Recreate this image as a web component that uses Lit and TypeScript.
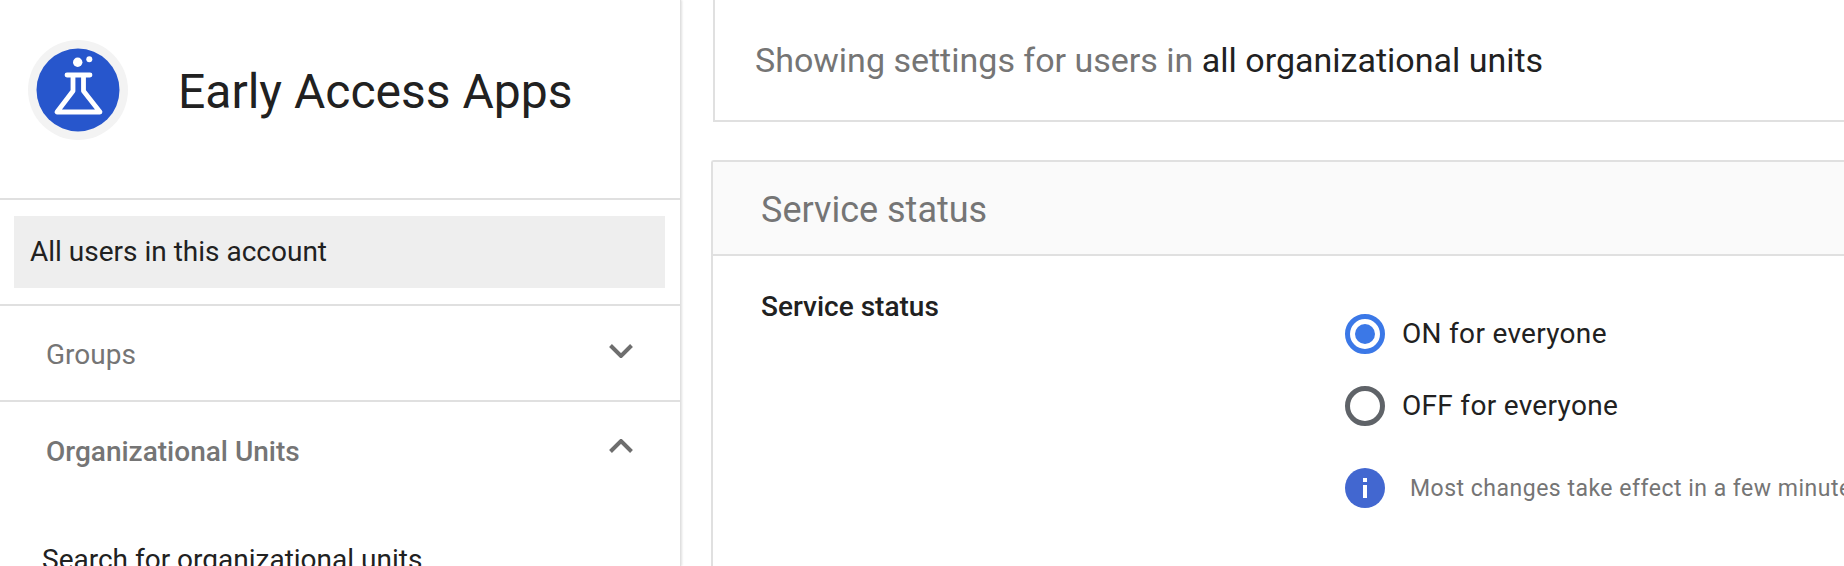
import { LitElement, html, css } from "lit";
import { customElement } from "lit/decorators.js";

@customElement("app-root")
export class AppRoot extends LitElement {
  static styles = css`
    :host {
      display: flex;
      width: 1844px;
      height: 566px;
      overflow: hidden;
      background: #fff;
      font-family: Roboto, "Liberation Sans", sans-serif;
      color: #212121;
    }
    .side {
      flex: none;
      box-sizing: border-box;
      width: 681px;
      height: 566px;
      overflow: hidden;
      border-right: 1px solid #e0e0e0;
      box-shadow: 1px 0 2px #0000001f;
    }
    .brand {
      box-sizing: border-box;
      height: 200px;
      padding: 40px 0 0 28px;
      display: flex;
      align-items: flex-start;
      gap: 50px;
      border-bottom: 2px solid #e0e0e0;
    }
    .logo {
      flex: none;
      display: block;
      width: 100px;
      height: 100px;
    }
    .brand h1 {
      margin: 24px 0 0;
      font-size: 48px;
      line-height: 56px;
      font-weight: 400;
    }
    .scope {
      padding: 16px 15px 16px 14px;
      border-bottom: 2px solid #e0e0e0;
    }
    .scope div {
      height: 72px;
      padding-left: 16px;
      background: #eee;
      font-size: 28px;
      line-height: 72px;
    }
    .row {
      box-sizing: border-box;
      height: 96px;
      padding: 2px 47px 0 46px;
      display: flex;
      align-items: center;
      justify-content: space-between;
      color: #757575;
      font-size: 28px;
    }
    .row.line {
      border-bottom: 2px solid #e0e0e0;
    }
    .row.line svg {
      margin-top: -6px;
    }
    .row b {
      font-weight: 500;
    }
    .row svg {
      width: 24px;
      height: 14px;
      margin-top: -10px;
    }
    .search {
      margin: 46px 0 0 42px;
      font-size: 28px;
      line-height: 32px;
    }
    .main {
      flex: none;
      width: 1163px;
      padding-left: 31px;
    }
    .note {
      box-sizing: border-box;
      height: 122px;
      margin-left: 1px;
      padding: 41px 0 0 40px;
      border: solid #e0e0e0;
      border-width: 0 0 2px 2px;
      color: #757575;
      font-size: 34px;
      line-height: 38px;
    }
    .note span {
      color: #212121;
    }
    .card {
      margin: 38px 0 0 -1px;
      border: solid #e0e0e0;
      border-width: 2px 0 0 2px;
      border-top-left-radius: 3px;
      height: 450px;
    }
    .card h2 {
      box-sizing: border-box;
      height: 94px;
      margin: 0;
      padding: 1px 0 0 48px;
      background: #fafafa;
      border-bottom: 2px solid #e0e0e0;
      color: #757575;
      font-size: 36px;
      font-weight: 400;
      line-height: 94px;
    }
    .body {
      display: flex;
      padding: 35px 0 0 48px;
    }
    .label {
      flex: none;
      width: 584px;
      font-size: 28px;
      font-weight: 500;
      line-height: 32px;
    }
    .opts {
      display: flex;
      flex-direction: column;
      padding-top: 23px;
      white-space: nowrap;
    }
    .opt {
      display: flex;
      align-items: center;
      gap: 17px;
      height: 40px;
      margin-bottom: 32px;
      font-size: 28px;
      line-height: 38px;
      letter-spacing: 0.3px;
    }
    .radio {
      flex: none;
      box-sizing: border-box;
      width: 40px;
      height: 40px;
      padding: 5px;
      border: 5px solid #5f6368;
      border-radius: 50%;
    }
    .radio.on {
      border-color: #3b78e7;
    }
    .radio.on::after {
      content: "";
      display: block;
      width: 20px;
      height: 20px;
      border-radius: 50%;
      background: #3b78e7;
    }
    .info {
      display: flex;
      align-items: center;
      gap: 25px;
      height: 40px;
      margin-top: 10px;
      color: #757575;
      font-size: 23px;
      letter-spacing: 0.5px;
    }
    .info svg {
      flex: none;
      width: 40px;
      height: 40px;
    }
  `;

  render() {
    return html`
      <aside class="side">
        <div class="brand">
          <svg class="logo" viewBox="0 0 100 100">
            <circle cx="50" cy="50" r="50" fill="#f3f3f3"></circle>
            <circle cx="50" cy="50" r="41.5" fill="#2756cc"></circle>
            <circle cx="49.7" cy="22.3" r="4.7" fill="#fff"></circle>
            <circle cx="61.3" cy="19.3" r="3" fill="#fff"></circle>
            <path
              d="M39 35H62M45 35V51L29 72H72L55.5 51V35"
              fill="none"
              stroke="#fff"
              stroke-width="4.8"
              stroke-linejoin="round"
              stroke-linecap="round"
            ></path>
          </svg>
          <h1>Early Access Apps</h1>
        </div>
        <div class="scope"><div>All users in this account</div></div>
        <div class="row line">
          <span>Groups</span>
          <svg viewBox="0 0 24 14">
            <path d="M1.5 1.5L12 12L22.5 1.5" fill="none" stroke="#6e6e6e" stroke-width="4"></path>
          </svg>
        </div>
        <div class="row">
          <b>Organizational Units</b>
          <svg viewBox="0 0 24 14">
            <path d="M1.5 12.5L12 2L22.5 12.5" fill="none" stroke="#6e6e6e" stroke-width="4"></path>
          </svg>
        </div>
        <div class="search">Search for organizational units</div>
      </aside>
      <main class="main">
        <div class="note">Showing settings for users in <span>all organizational units</span></div>
        <section class="card">
          <h2>Service status</h2>
          <div class="body">
            <div class="label">Service status</div>
            <div class="opts">
              <div class="opt"><i class="radio on"></i><span>ON for everyone</span></div>
              <div class="opt"><i class="radio"></i><span>OFF for everyone</span></div>
              <div class="info">
                <svg viewBox="0 0 40 40">
                  <circle cx="20" cy="20" r="20" fill="#4267d0"></circle>
                  <rect x="18" y="10" width="4" height="4" fill="#fff"></rect>
                  <rect x="18" y="17" width="4" height="13" fill="#fff"></rect>
                </svg>
                <span>Most changes take effect in a few minutes</span>
              </div>
            </div>
          </div>
        </section>
      </main>
    `;
  }
}
